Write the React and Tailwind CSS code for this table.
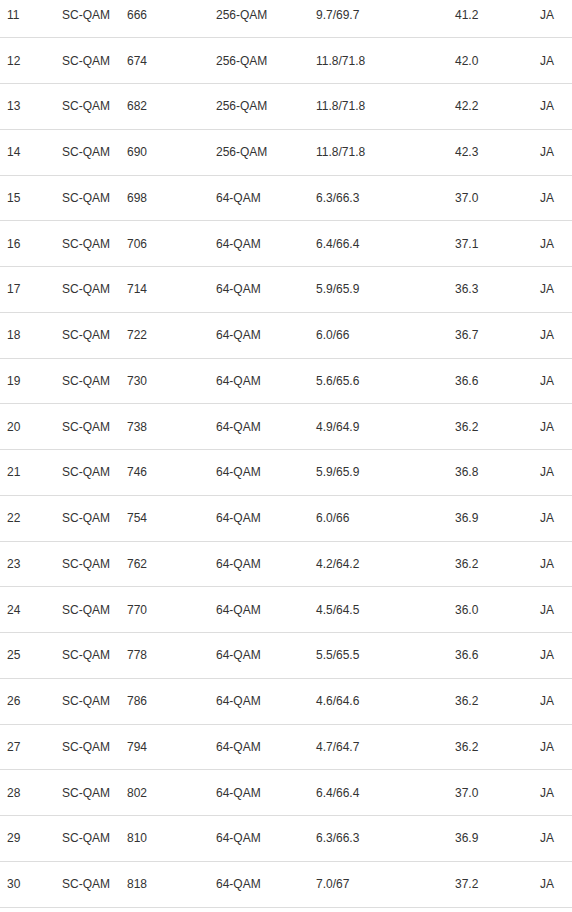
import React from 'react';

const rows = [
  [11, 666, '256-QAM', '9.7/69.7', '41.2'],
  [12, 674, '256-QAM', '11.8/71.8', '42.0'],
  [13, 682, '256-QAM', '11.8/71.8', '42.2'],
  [14, 690, '256-QAM', '11.8/71.8', '42.3'],
  [15, 698, '64-QAM', '6.3/66.3', '37.0'],
  [16, 706, '64-QAM', '6.4/66.4', '37.1'],
  [17, 714, '64-QAM', '5.9/65.9', '36.3'],
  [18, 722, '64-QAM', '6.0/66', '36.7'],
  [19, 730, '64-QAM', '5.6/65.6', '36.6'],
  [20, 738, '64-QAM', '4.9/64.9', '36.2'],
  [21, 746, '64-QAM', '5.9/65.9', '36.8'],
  [22, 754, '64-QAM', '6.0/66', '36.9'],
  [23, 762, '64-QAM', '4.2/64.2', '36.2'],
  [24, 770, '64-QAM', '4.5/64.5', '36.0'],
  [25, 778, '64-QAM', '5.5/65.5', '36.6'],
  [26, 786, '64-QAM', '4.6/64.6', '36.2'],
  [27, 794, '64-QAM', '4.7/64.7', '36.2'],
  [28, 802, '64-QAM', '6.4/66.4', '37.0'],
  [29, 810, '64-QAM', '6.3/66.3', '36.9'],
  [30, 818, '64-QAM', '7.0/67', '37.2'],
];

export default function App() {
  return (
    <div className="min-h-screen bg-white overflow-hidden font-['Liberation_Sans',Arial,sans-serif] text-[12px] text-[#333]">
      <div className="-mt-[7.5px]">
        {rows.map(([ch, freq, mod, pow, snr]) => (
          <div
            key={ch}
            className="grid grid-cols-[55px_65px_89px_100px_139px_85px_1fr] items-center h-[45.75px] border-b border-[#ddd] pl-[7px]"
          >
            <div>{ch}</div>
            <div>SC-QAM</div>
            <div>{freq}</div>
            <div>{mod}</div>
            <div>{pow}</div>
            <div>{snr}</div>
            <div>JA</div>
          </div>
        ))}
      </div>
    </div>
  );
}
